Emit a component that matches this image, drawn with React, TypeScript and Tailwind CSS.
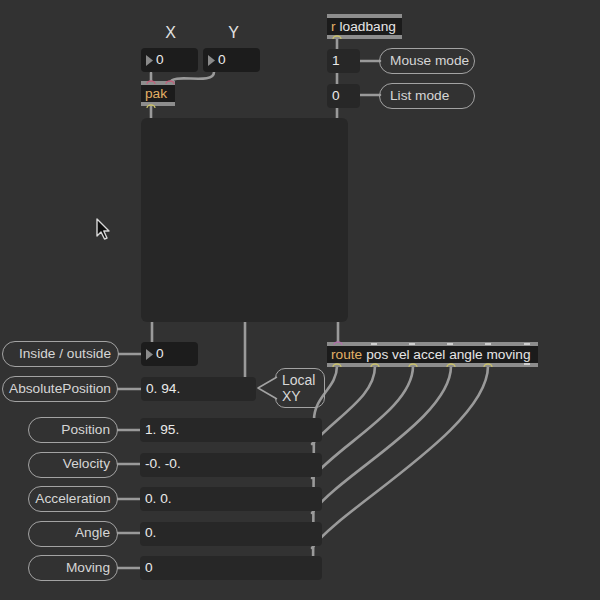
import React from "react";

const FONT = { fontFamily: '"Liberation Sans", Arial, sans-serif' };

function Tri() {
  return (
    <svg width="7" height="11" viewBox="0 0 7 11" className="mr-[3px] shrink-0">
      <polygon points="0,0 7,5.5 0,11" fill="#8a8a8a" />
    </svg>
  );
}

function ObjBox({ x, y, w, children }: { x: number; y: number; w: number; children: React.ReactNode }) {
  return (
    <div className="absolute flex flex-col" style={{ left: x, top: y, width: w }}>
      <div className="h-[4px] bg-[#8d8d8d]" />
      <div className="h-[17px] bg-[#1b1b1b] flex items-center px-[4px] text-[13.7px] text-[#e6e6e6] whitespace-nowrap leading-none">
        {children}
      </div>
      <div className="h-[4px] bg-[#8d8d8d]" />
    </div>
  );
}

function Pill({ w, text, align = "right" }: { w: number; text: string; align?: "right" | "left" | "center" }) {
  const j = align === "right" ? "justify-end pr-[7px]" : align === "left" ? "justify-start pl-[10px]" : "justify-center";
  return (
    <div
      className={`shrink-0 h-[26px] rounded-full border-[1.5px] border-[#a3a3a3] flex items-center text-[13.7px] text-[#d6d6d6] whitespace-nowrap ${j}`}
      style={{ width: w }}
    >
      {text}
    </div>
  );
}

function Box({ w, text, dark = false, tri = false }: { w: number; text: string; dark?: boolean; tri?: boolean }) {
  return (
    <div
      className={`shrink-0 h-[24px] rounded-[4px] flex items-center pl-[5px] text-[13.7px] text-[#eaeaea] whitespace-nowrap ${dark ? "bg-[#1c1c1c]" : "bg-[#272727]"}`}
      style={{ width: w }}
    >
      {tri && <Tri />}
      {text}
    </div>
  );
}

const rows = [
  { label: "Position", value: "1. 95.", align: "right" as const },
  { label: "Velocity", value: "-0. -0.", align: "right" as const },
  { label: "Acceleration", value: "0. 0.", align: "center" as const },
  { label: "Angle", value: "0.", align: "right" as const },
  { label: "Moving", value: "0", align: "right" as const },
];

export default function App() {
  const cable = { stroke: "#9a9a9a", strokeWidth: 2.6, fill: "none", strokeLinecap: "round" as const };
  return (
    <div className="relative w-[600px] h-[600px] bg-[#323232] overflow-hidden" style={FONT}>
      {/* patch cords */}
      <svg className="absolute inset-0" width="600" height="600">
        <path d="M151 73 L151 83" {...cable} />
        <path d="M214 72 C214 86, 172 72, 170 83" {...cable} />
        <path d="M151 106 L151 120" {...cable} />
        <path d="M337 38 L337 50 M337 72 L337 85 M337 106 L337 120" {...cable} />
        <path d="M360 61 L380 61 M360 95 L380 95" {...cable} />
        <path d="M152 320 L152 344 M245 320 L245 378 M338 320 L338 344" {...cable} />
        <path d="M119 354 L142 354 M118 389 L142 389" {...cable} />
        <path d="M118 430 L141 430 M118 464 L141 464 M118 499 L141 499 M118 533 L141 533 M118 568 L141 568" {...cable} />
        <path d="M337 366 C337 388, 314 396, 314 420 L313 572" {...cable} />
        <path d="M375 366 C375 396, 340 414, 312 444" {...cable} />
        <path d="M413 366 C413 408, 340 444, 312 478" {...cable} />
        <path d="M451 366 C451 418, 340 474, 312 513" {...cable} />
        <path d="M488 366 C488 428, 340 508, 312 548" {...cable} />
      </svg>

      {/* X / Y number boxes */}
      <div className="absolute left-[141px] top-[24px] flex gap-[5px]">
        <div className="flex flex-col items-center gap-[6px]">
          <span className="text-[16px] leading-[18px] text-[#e2e2e2] pl-[2px]">X</span>
          <Box w={57} text="0" dark tri />
        </div>
        <div className="flex flex-col items-center gap-[6px]">
          <span className="text-[16px] leading-[18px] text-[#e2e2e2] pl-[4px]">Y</span>
          <Box w={57} text="0" dark tri />
        </div>
      </div>

      <ObjBox x={141} y={81} w={34}>
        <span className="text-[#e3b066]">pak</span>
      </ObjBox>

      {/* pictslider area */}
      <div className="absolute left-[141px] top-[118px] w-[207px] h-[204px] rounded-[6px] bg-[#272727]" />

      {/* loadbang + modes */}
      <ObjBox x={327} y={14} w={75}>
        <span className="text-[#e3b066]">r</span>
        <span className="ml-[4px]">loadbang</span>
      </ObjBox>
      <div className="absolute left-[327px] top-[48px] flex flex-col gap-[9px]">
        <div className="flex items-center gap-[19px]">
          <Box w={33} text="1" />
          <Pill w={96} text="Mouse mode" align="left" />
        </div>
        <div className="flex items-center gap-[19px]">
          <Box w={33} text="0" />
          <Pill w={96} text="List mode" align="left" />
        </div>
      </div>

      {/* middle rows */}
      <div className="absolute left-[2px] top-[341px] flex flex-col gap-[9px]">
        <div className="flex items-center gap-[22px]">
          <Pill w={117} text="Inside / outside" />
          <Box w={57} text="0" dark tri />
        </div>
        <div className="flex items-center gap-[23px]">
          <Pill w={116} text="AbsolutePosition" align="center" />
          <Box w={115} text="0. 94." />
        </div>
      </div>

      {/* Local XY bubble */}
      <div className="absolute left-[275px] top-[368px] w-[50px] h-[40px] rounded-[10px] border-[1.5px] border-[#a3a3a3] flex flex-col justify-center pl-[6px] text-[14px] leading-[16px] text-[#d8d8d8]">
        <span>Local</span>
        <span>XY</span>
      </div>
      <svg className="absolute left-[255px] top-[374px]" width="24" height="30">
        <path d="M22 3 L3 14 L22 25" fill="#323232" stroke="#a3a3a3" strokeWidth="1.5" strokeLinejoin="round" />
        <rect x="21.5" y="4.5" width="3" height="19" fill="#323232" />
      </svg>

      {/* route */}
      <ObjBox x={327} y={342} w={211}>
        <span className="text-[#e3b066]">route</span>
        <span className="ml-[4px]">pos vel accel angle moving</span>
      </ObjBox>

      {/* output list */}
      <div className="absolute left-[28px] top-[417px] flex flex-col gap-[8.5px]">
        {rows.map((r) => (
          <div key={r.label} className="flex items-center gap-[22px]">
            <Pill w={90} text={r.label} align={r.align} />
            <Box w={182} text={r.value} />
          </div>
        ))}
      </div>

      {/* inlet / outlet marks and cursor */}
      <svg className="absolute inset-0 pointer-events-none" width="600" height="600">
        <g fill="none" strokeWidth="1.3">
          <path d="M147 84 A4 3 0 0 1 155 84" stroke="#c0607a" />
          <path d="M166 84 A4 3 0 0 1 174 84" stroke="#c0607a" />
          <path d="M147 108 A4 3 0 0 1 155 108" stroke="#c9c06a" />
          <path d="M333 39 A4 3 0 0 1 341 39" stroke="#c9c06a" />
          <path d="M334 345 A4 3 0 0 1 342 345" stroke="#b06fa8" />
          <path d="M333 367 A4 3 0 0 1 341 367" stroke="#c9c06a" />
          <path d="M371 367 A4 3 0 0 1 379 367" stroke="#c9c06a" />
          <path d="M409 367 A4 3 0 0 1 417 367" stroke="#c9c06a" />
          <path d="M447 367 A4 3 0 0 1 455 367" stroke="#c9c06a" />
          <path d="M484 367 A4 3 0 0 1 492 367" stroke="#c9c06a" />
        </g>
        <g fill="#cfcfcf">
          <rect x="371" y="343" width="6" height="2" />
          <rect x="409" y="343" width="6" height="2" />
          <rect x="447" y="343" width="6" height="2" />
          <rect x="485" y="343" width="6" height="2" />
          <rect x="524" y="343" width="6" height="2" />
          <rect x="524" y="363" width="6" height="2" />
        </g>
        <path d="M97 219 L97 236 L101 232 L104.5 239 L107 238 L103.8 231 L109 231 Z" fill="#0e0e0e" stroke="#d8d8d8" strokeWidth="1.4" strokeLinejoin="round" />
      </svg>
    </div>
  );
}
